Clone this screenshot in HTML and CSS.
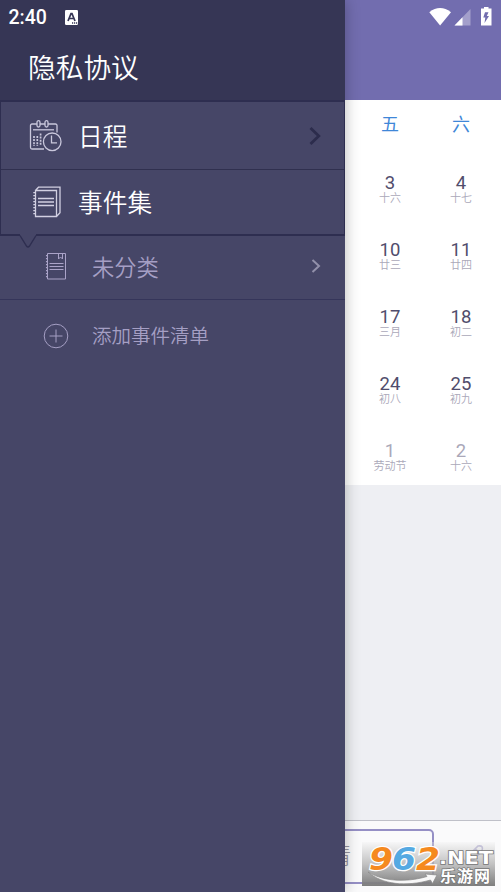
FILE: index.html
```html
<!DOCTYPE html>
<html lang="zh-CN">
<head>
<meta charset="utf-8">
<title>日程</title>
<link rel="stylesheet" href="styles.css">
</head>
<body>
<div class="screen">
  <aside class="drawer">
    <header class="drawer-head">
      <div class="status">
        <span class="time">2:40</span>
        <svg class="ime" width="13" height="15" viewBox="0 0 13 15"><rect width="13" height="15" rx="1.2" fill="#fff"/><path d="M3 11 6 3.600h1L10 11M4.200 8.500h4.600" fill="none" stroke="#363655" stroke-width="1.700"/><path d="M7 13h1.200M9 13h1.200M11 13h1.200" stroke="#363655" stroke-width="1.300"/></svg>
      </div>
      <div class="privacy">隐私协议</div>
    </header>
    <nav class="menu">
      <div class="group">
        <div class="item schedule">
          <svg class="icon" width="34" height="34" viewBox="0 0 34 34" fill="none" stroke="#c9c7dc" stroke-width="1.300">
            <path d="M8 5H3a1.500 1.500 0 0 0-1.500 1.500v22A1.500 1.500 0 0 0 3 30h12M11 5h5M19 5h7.500a1.500 1.500 0 0 1 1.500 1.500v7"/>
            <path d="M4 10.800h21"/>
            <rect x="8" y="1.700" width="3" height="6.300" rx="1.500"/><rect x="16" y="1.700" width="3" height="6.300" rx="1.500"/>
            <path d="M5 17v10M8.300 17v10M11.600 14.500v12.500" stroke-width="1.700" stroke-dasharray="2 1.100"/>
            <circle cx="23.200" cy="22.800" r="8.800"/><path d="M22.500 16.500v7.300H28"/>
          </svg>
          <span class="label">日程</span>
          <svg class="arrow" width="14" height="20" viewBox="0 0 14 20" fill="none" stroke="#2c2c4c" stroke-width="2.800"><path d="M2.500 2 10.800 10 2.500 18"/></svg>
        </div>
        <div class="item events">
          <svg class="icon" width="34" height="34" viewBox="0 0 34 34" fill="none" stroke="#d2d0e2" stroke-width="1.300">
            <path d="M6.500 5.500h21v26h-21zM6.500 5.500 9.500 2.200h21.500v25.500L27.500 31.500"/>
            <path d="M9 13.500h16M9 17h16M9 20.500h16"/>
            <path d="M5.400 7v24" stroke-width="2.200" stroke-dasharray="1.300 1.700"/>
          </svg>
          <span class="label">事件集</span>
        </div>
        <svg class="notch" width="18" height="15" viewBox="0 0 18 15"><path d="M1 0h16v2.500L10.500 12q-1.500 2-3 0L1 2.500z" fill="#464667"/><path d="M1 1.500 7.500 12q1.500 2 3 0L17 1.500" fill="none" stroke="#2e2e50" stroke-width="1.400"/></svg>
      </div>
      <div class="sub uncategorized">
        <svg class="icon" width="24" height="30" viewBox="0 0 24 30" fill="none" stroke="#aaa3c8" stroke-width="1">
          <path d="M3.500 2.500h18v25.500h-18zM14.500 2.500V8l2-2 2 2V2.500"/><path d="M5.500 12.500h14M5.500 15.500h14M5.500 18.500h14"/>
          <path d="M2.800 4v24" stroke-width="1.700" stroke-dasharray="1.300 1.700"/>
        </svg>
        <span class="label">未分类</span>
        <svg class="arrow" width="12" height="16" viewBox="0 0 12 16" fill="none" stroke="#9290aa" stroke-width="2"><path d="M2.500 2 9 8l-6.500 6"/></svg>
      </div>
      <div class="sub add">
        <svg class="icon" width="26" height="26" viewBox="0 0 26 26" fill="none" stroke="#a59fc4"><circle cx="13" cy="13" r="11.800"/><path d="M13 6.500v13M6.500 13h13"/></svg>
        <span class="label">添加事件清单</span>
      </div>
    </nav>
  </aside>
  <main class="page">
    <header class="topbar">
      <svg width="72" height="22" viewBox="0 0 72 22">
        <path d="M.3 5.200Q11-3 22 5.200L11.100 18.500z" fill="#fff"/>
        <path d="M41.500 2v16.500H25.500z" fill="#a39fcb"/><path d="M33.500 10.200v8.300h-8z" fill="#fff"/>
        <path d="M55 0h4.500v1.600h3v17H52v-17h3z" fill="#fff"/><path d="M56 5.300 54.300 10.500h2L55.500 16l4.500-7h-2.200l1.700-3.700z" fill="#726daf"/>
      </svg>
    </header>
    <section class="calendar">
      <div class="week"><span>五</span><span>六</span></div>
      <div class="days">
        <div class="day"><b>3</b><small>十六</small></div><div class="day"><b>4</b><small>十七</small></div>
        <div class="day"><b>10</b><small>廿三</small></div><div class="day"><b>11</b><small>廿四</small></div>
        <div class="day"><b>17</b><small>三月</small></div><div class="day"><b>18</b><small>初二</small></div>
        <div class="day"><b>24</b><small>初八</small></div><div class="day"><b>25</b><small>初九</small></div>
        <div class="day next"><b>1</b><small>劳动节</small></div><div class="day next"><b>2</b><small>十六</small></div>
      </div>
    </section>
    <footer class="bottom">
      <div class="input"><span>情</span></div>
      <svg class="pen" width="32" height="32" viewBox="0 0 32 32" fill="none" stroke="#9a94c8" stroke-width="1.700"><path d="M5 16l7 8L26 10q2-6-4-5L12 15M19 8l5 4"/></svg>
    </footer>
  </main>
  <div class="watermark">
    <svg width="133" height="44" viewBox="0 0 133 44">
      <path d="M6 30C25 41.500 50 39 65 34.500l-2-2.500 12 1-4.500 8.500-2-3.500C44 45 20 42.500 6 30z" fill="#f8f8f8" stroke="#888" stroke-width=".7"/>
      <g class="digits"><text x="7" y="27.500" textLength="24" lengthAdjust="spacingAndGlyphs" fill="#f58a1f">9</text><text x="30" y="27.500" textLength="24" lengthAdjust="spacingAndGlyphs" fill="#55a9e2">6</text><text x="54" y="27.500" textLength="24" lengthAdjust="spacingAndGlyphs" fill="#f58a1f">2</text></g>
      <text class="net" x="77" y="22" textLength="54" lengthAdjust="spacingAndGlyphs">.NET</text>
      <text class="site" x="78" y="39.500" textLength="50">乐游网</text>
    </svg>
  </div>
</div>
</body>
</html>
```

FILE: styles.css
```css
* { box-sizing: border-box; }
body {
  margin: 0;
  font-family: Roboto, "Noto Sans CJK SC", sans-serif;
}
svg { display: block; flex: none; }
.screen {
  position: relative;
  display: grid;
  grid-template-columns: 345px 156px;
  width: 501px;
  height: 892px;
  overflow: hidden;
}
.drawer {
  position: relative;
  z-index: 1;
  background: #464667;
  box-shadow: 0 0 14px rgba(0, 0, 0, .28);
}
.drawer-head {
  height: 100px;
  background: #363655;
  color: #fff;
}
.status {
  display: flex;
  align-items: center;
  gap: 18px;
  height: 34px;
  padding-left: 8.500px;
}
.time {
  padding-top: 1px;
  font-size: 19.500px;
  font-weight: 500;
  line-height: 33px;
}
.privacy {
  padding: 1px 0 0 28px;
  font-size: 27.700px;
  font-weight: 350;
  line-height: 68px;
}
.group {
  position: relative;
  height: 136px;
  border: 2px solid #2e2e50;
  border-left-width: 1px;
  border-right-width: 1px;
}
.item {
  display: flex;
  align-items: center;
  color: #fff;
  font-size: 24.700px;
  font-weight: 350;
}
.item .icon { margin-left: 28px; }
.item .label { margin-left: 15px; padding-bottom: 1px; }
.schedule {
  height: 68px;
  border-bottom: 1px solid #30304f;
}
.events { height: 64px; }
.events .label { padding-bottom: 2px; }
.arrow { margin-left: auto; }
.schedule .arrow { margin-right: 22px; }
.notch {
  position: absolute;
  left: 18px;
  top: 132px;
}
.sub {
  display: flex;
  align-items: center;
  height: 64px;
  color: #a59fc4;
  font-weight: 350;
}
.sub .label { padding-bottom: 4px; }
.uncategorized {
  border-bottom: 1px solid #35355a;
  font-size: 22.300px;
}
.uncategorized .icon { margin: -3px 0 0 44px; }
.uncategorized .label { margin-left: 24px; padding-bottom: 4px; }
.uncategorized .arrow { margin: -4px 23px 0 auto; }
.add {
  height: 72px;
  font-size: 19.500px;
}
.add .icon { margin-left: 43px; }
.add .label { margin-left: 23px; }
.page {
  display: flex;
  flex-direction: column;
  background: #eeeff3;
  overflow: hidden;
}
.topbar {
  display: flex;
  justify-content: flex-end;
  height: 100px;
  padding-top: 7px;
  background: #726daf;
}
.calendar {
  height: 385px;
  padding-left: 9.500px;
  background: #fff;
}
.week, .days {
  display: grid;
  grid-template-columns: 71px 71px;
  text-align: center;
}
.week {
  height: 49px;
  color: #3f87d8;
  font-size: 18px;
  line-height: 49px;
}
.days { grid-auto-rows: 67px; }
.day {
  display: flex;
  flex-direction: column;
  padding-top: 25px;
}
.day b {
  color: #514d6c;
  font-size: 18.500px;
  font-weight: 400;
  line-height: 19px;
  letter-spacing: .1px;
}
.day small {
  color: #aaa8b9;
  font-size: 11px;
  font-weight: 350;
  line-height: 12px;
}
.next b { color: #aaa8b9; }
.bottom {
  display: flex;
  align-items: center;
  gap: 22px;
  height: 72px;
  margin-top: auto;
  border-top: 1px solid #bfc0c8;
  background: #fafafb;
}
.input {
  width: 109px;
  height: 55px;
  margin-left: -20px;
  border: 2px solid #958fc5;
  border-radius: 5px;
  color: #96949f;
  font-size: 24px;
  font-weight: 300;
  line-height: 51px;
}
.pen { opacity: .7; }
.watermark {
  position: absolute;
  z-index: 2;
  left: 362px;
  top: 842px;
  width: 133px;
  height: 44px;
  background: linear-gradient(rgba(240, 240, 240, .3), rgba(175, 175, 175, .75) 50%, rgba(122, 122, 122, .97));
}
.digits {
  font: italic 700 32px "DejaVu Sans", sans-serif;
  stroke: #fff;
  stroke-width: 2.500px;
  paint-order: stroke;
}
.net {
  font: 700 18px "DejaVu Sans", sans-serif;
  fill: #fff;
  stroke: #777;
  stroke-width: 1.500px;
  paint-order: stroke;
}
.site {
  font: 700 16px "Noto Sans CJK SC", sans-serif;
  fill: #fff;
  stroke: #777;
  stroke-width: 1.500px;
  paint-order: stroke;
}
```
